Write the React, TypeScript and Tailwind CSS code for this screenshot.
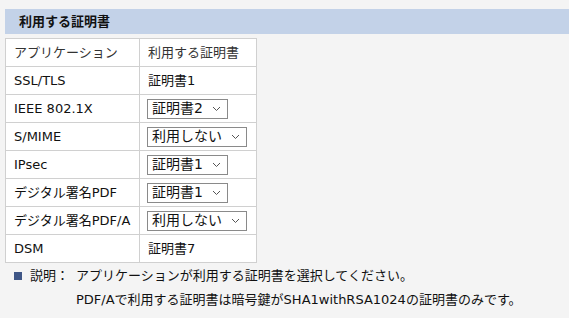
import React from "react";

const font = { fontFamily: '"DejaVu Sans", "Noto Sans CJK JP", sans-serif' };

type Row = { app: string; cert: string; select?: boolean; wide?: boolean };

const rows: Row[] = [
  { app: "SSL/TLS", cert: "証明書1" },
  { app: "IEEE 802.1X", cert: "証明書2", select: true },
  { app: "S/MIME", cert: "利用しない", select: true, wide: true },
  { app: "IPsec", cert: "証明書1", select: true },
  { app: "デジタル署名PDF", cert: "証明書1", select: true },
  { app: "デジタル署名PDF/A", cert: "利用しない", select: true, wide: true },
  { app: "DSM", cert: "証明書7" },
];

const Chevron = () => (
  <svg width="9" height="6" viewBox="0 0 9 6" className="ml-auto">
    <path d="M1 1l3.5 3.5L8 1" fill="none" stroke="#555" strokeWidth="1" />
  </svg>
);

const FakeSelect = ({ value, wide }: { value: string; wide?: boolean }) => (
  <div
    className={`flex items-center h-[20px] border border-[#8a8a8a] bg-white pl-[4px] pr-[6px] text-[14px] text-[#111] ${
      wide ? "w-[100px]" : "w-[81px]"
    }`}
  >
    <span>{value}</span>
    <Chevron />
  </div>
);

export default function App() {
  return (
    <div className="w-[569px] h-[318px] bg-[#f4f4f4] pt-[9px]" style={font}>
      <div className="ml-[5px] h-[25px] bg-[#c3d2e8] flex items-center pl-[14px]">
        <span className="text-[13px] font-bold text-[#111]">利用する証明書</span>
      </div>
      <table className="ml-[5px] mt-[4px] border-collapse bg-white text-[13px] text-[#111]">
        <thead>
          <tr className="h-[28px]">
            <th className="w-[134px] border border-[#d0d0d0] text-left font-normal pl-[8px] text-[#333]">アプリケーション</th>
            <th className="w-[117px] border border-[#d0d0d0] text-left font-normal pl-[8px] text-[#333]">利用する証明書</th>
          </tr>
        </thead>
        <tbody>
          {rows.map((r) => (
            <tr key={r.app} className="h-[28px]">
              <td className="border border-[#d0d0d0] pl-[8px]">{r.app}</td>
              <td className="border border-[#d0d0d0] pl-[7px]">
                {r.select ? (
                  <FakeSelect value={r.cert} wide={r.wide} />
                ) : (
                  <span className="pl-[1px]">{r.cert}</span>
                )}
              </td>
            </tr>
          ))}
        </tbody>
      </table>
      <div className="flex mt-[1px] pl-[14px] text-[13px] text-[#111] leading-[24px]">
        <div className="flex items-center h-[24px]">
          <span className="w-[8px] h-[8px] bg-[#3f5686]" />
        </div>
        <span className="ml-[8px] w-[46px]">説明：</span>
        <div>
          <div>アプリケーションが利用する証明書を選択してください。</div>
          <div>PDF/Aで利用する証明書は暗号鍵がSHA1withRSA1024の証明書のみです。</div>
        </div>
      </div>
    </div>
  );
}
